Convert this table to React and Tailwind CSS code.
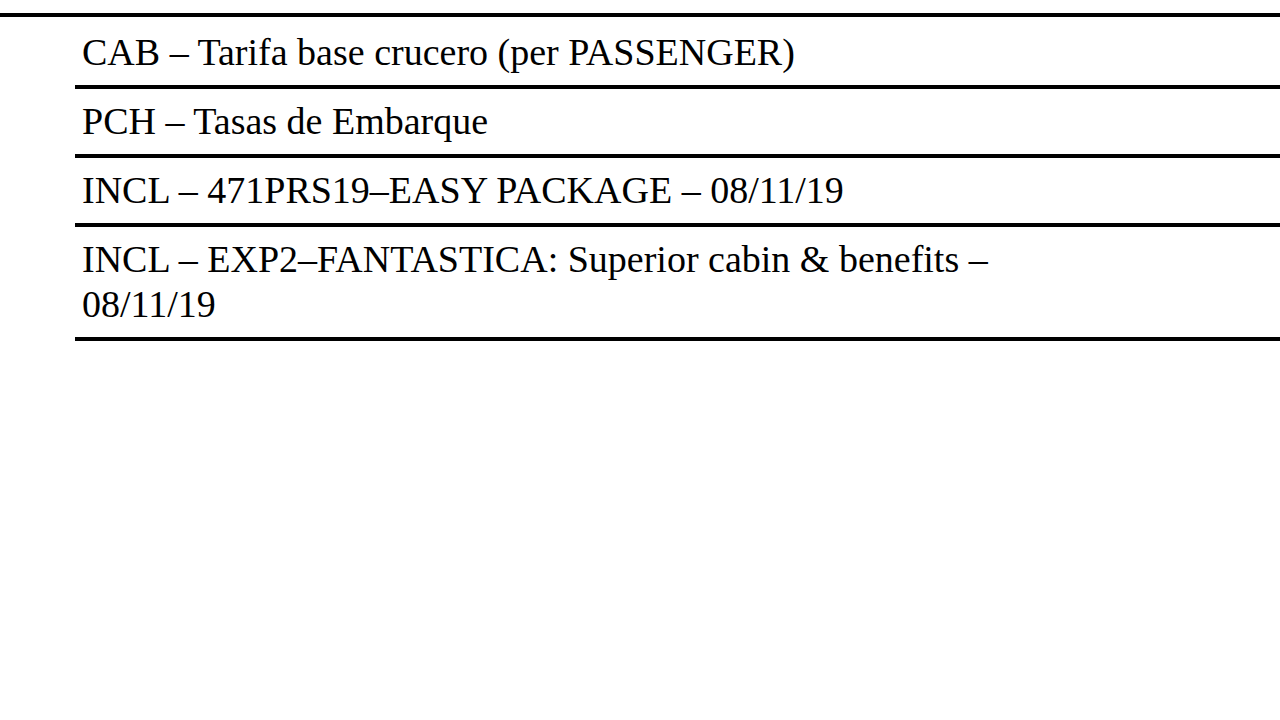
const rows = [
  "CAB – Tarifa base crucero (per PASSENGER)",
  "PCH – Tasas de Embarque",
  "INCL – 471PRS19–EASY PACKAGE – 08/11/19",
  "INCL – EXP2–FANTASTICA: Superior cabin & benefits – 08/11/19",
];

export default function App() {
  return (
    <div className="h-[720px] w-[1280px] overflow-hidden bg-white font-['Liberation_Serif','Times_New_Roman',serif] text-[38px] leading-[45px] text-black">
      <div className="mt-[13px] h-[4px] bg-black" />
      <div className="ml-[75px]">
        {rows.map((text, i) => (
          <div
            key={text}
            className={
              i === 0
                ? "pl-[7px] pt-[13px] pb-[10px]"
                : "border-t-4 border-black pl-[7px] pt-[10px] pb-[10px]"
            }
          >
            <p className="max-w-[960px]">{text}</p>
          </div>
        ))}
        <div className="h-[4px] bg-black" />
      </div>
    </div>
  );
}
